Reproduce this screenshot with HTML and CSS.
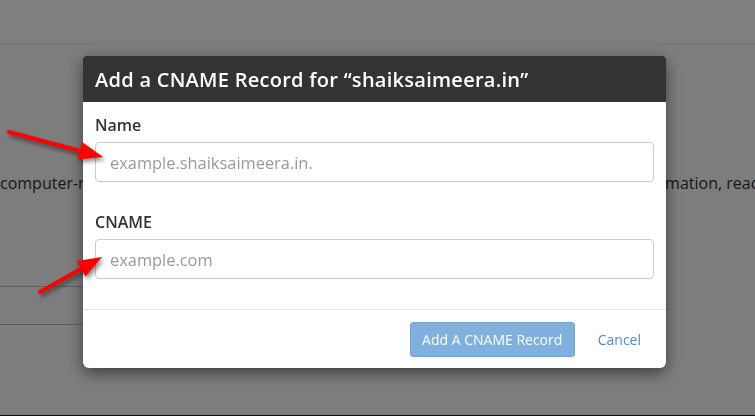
FILE: index.html
```html
<!DOCTYPE html>
<html lang="en">
<head>
<meta charset="utf-8">
<title>Add a CNAME Record</title>
<link rel="stylesheet" href="styles.css">
</head>
<body>
<div class="page">
  <header class="topbar"></header>
  <main class="content">
    <div class="intro">
      <span class="intro-left">computer-name records point one domain name to another domain name</span>
      <span class="intro-right">For more information, read</span>
    </div>
    <div class="table">
      <div class="row"></div>
    </div>
  </main>
  <div class="bottombar"></div>
</div>

<div class="overlay"></div>

<div class="modal">
  <div class="modal-header">
    <h4 class="modal-title">Add a CNAME Record for “shaiksaimeera.in”</h4>
  </div>
  <div class="modal-body">
    <div class="form-group">
      <label class="field-label" for="name">Name</label>
      <input class="field-input" id="name" type="text" placeholder="example.shaiksaimeera.in.">
    </div>
    <div class="form-group last">
      <label class="field-label" for="cname">CNAME</label>
      <input class="field-input" id="cname" type="text" placeholder="example.com">
    </div>
  </div>
  <div class="modal-footer">
    <button class="btn-primary" type="button">Add A CNAME Record</button>
    <a class="btn-link" href="#">Cancel</a>
  </div>
</div>

<svg class="arrows" width="755" height="416" viewBox="0 0 755 416" xmlns="http://www.w3.org/2000/svg">
  <g class="arrow">
    <line x1="9" y1="132" x2="82" y2="151.5" stroke="#ff0000" stroke-width="4" stroke-linecap="round"/>
    <polygon points="103,157 77.5,159.5 82.1,142.1" fill="#ff0000"/>
  </g>
  <g class="arrow">
    <line x1="40" y1="292" x2="82" y2="268.3" stroke="#ff0000" stroke-width="4" stroke-linecap="round"/>
    <polygon points="102,257 85.5,276.6 76.7,261" fill="#ff0000"/>
  </g>
</svg>
</body>
</html>
```

FILE: styles.css
```css
* { box-sizing: border-box; }

html, body {
  margin: 0;
  padding: 0;
  width: 755px;
  height: 416px;
  overflow: hidden;
  font-family: "Open Sans", "Liberation Sans", sans-serif;
  background: #ffffff;
}

.page {
  display: flex;
  flex-direction: column;
  height: 416px;
}

.topbar {
  height: 44px;
  background: #ffffff;
  border-bottom: 1px solid #ececec;
  flex: none;
}

.content {
  flex: 1;
  background: #fafafa;
}

.intro {
  display: grid;
  grid-template-columns: 663px 92px;
  margin-top: 127px;
  font-size: 16px;
  line-height: 24px;
  color: #333;
  white-space: nowrap;
}

.intro-left,
.intro-right {
  overflow: hidden;
}

.intro-right {
  text-indent: -106px;
}

.table {
  margin-top: 91px;
  width: 420px;
  border-top: 1px solid #bdbdbd;
}

.row {
  height: 38px;
  border-bottom: 1px solid #bdbdbd;
}

.bottombar {
  height: 1px;
  background: #222;
  flex: none;
}

.overlay {
  position: fixed;
  inset: 0;
  background: rgba(0, 0, 0, 0.5);
}

.modal {
  position: fixed;
  left: 83px;
  top: 56px;
  width: 583px;
  background: #fff;
  border-radius: 3px 3px 6px 6px;
  box-shadow: 0 5px 15px rgba(0, 0, 0, 0.5);
}

.modal-header {
  height: 46px;
  background: #333333;
  border-radius: 3px 3px 0 0;
  display: flex;
  align-items: center;
  padding: 0 12px;
}

.modal-title {
  margin: 0;
  color: #fff;
  font-size: 20px;
  font-weight: 600;
  letter-spacing: 0.27px;
  line-height: 26px;
  padding-top: 1px;
}

.modal-body {
  padding: 13px 12px 30px;
}

.form-group {
  display: flex;
  flex-direction: column;
  margin-bottom: 30px;
}

.form-group.last {
  margin-bottom: 0;
}

.field-label {
  font-size: 16px;
  font-weight: 600;
  line-height: 21px;
  color: #333;
  margin-bottom: 6px;
}

.field-input {
  height: 40px;
  width: 100%;
  border: 1px solid #cccccc;
  border-radius: 4px;
  padding: 0 14px;
  font-family: inherit;
  font-size: 16.4px;
  color: #555;
  background: #fff;
  outline: none;
}

.field-input::placeholder {
  color: #999;
}

.modal-footer {
  border-top: 1px solid #e5e5e5;
  display: flex;
  justify-content: flex-end;
  align-items: center;
  gap: 23px;
  padding: 12px 25px 11px 0;
}

.btn-primary {
  height: 35px;
  width: 165px;
  background: #80b1de;
  border: 1px solid #73a4d3;
  border-radius: 3px;
  color: #fff;
  font-family: inherit;
  font-size: 14px;
  padding: 0;
}

.btn-link {
  color: #4a8ccb;
  font-size: 14px;
  text-decoration: none;
  line-height: 20px;
}

.arrows {
  position: fixed;
  left: 0;
  top: 0;
}

.arrow {
  filter: drop-shadow(2px 3px 2px rgba(0, 0, 0, 0.45));
}
```
